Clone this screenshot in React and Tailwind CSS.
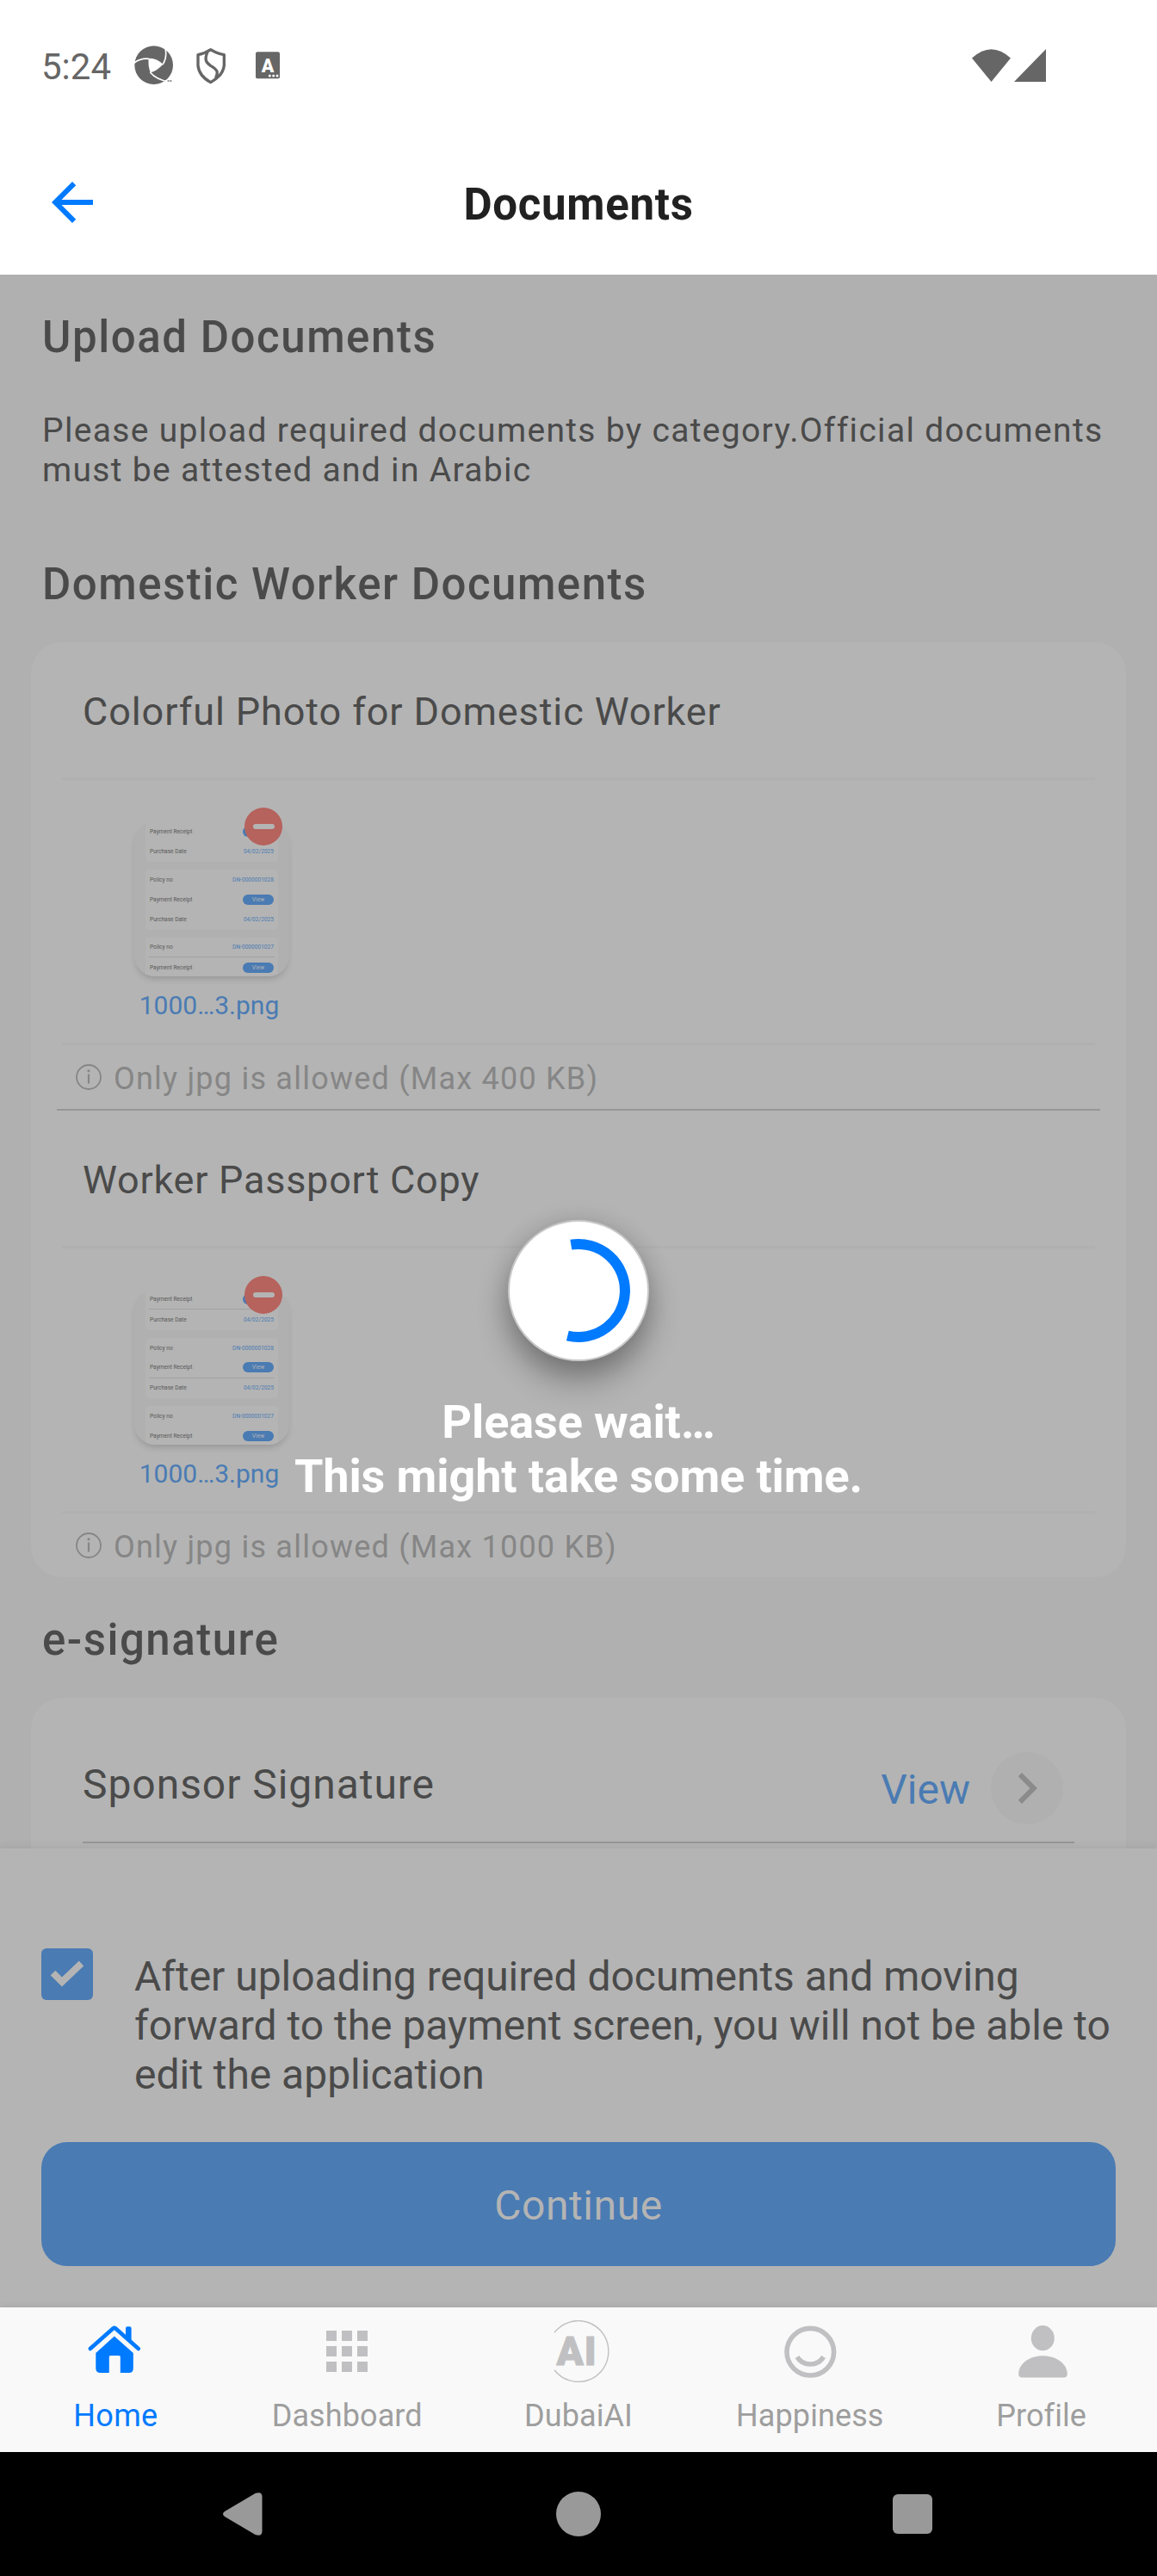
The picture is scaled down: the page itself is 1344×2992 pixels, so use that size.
function StatusBar() {
  return (
    <header className="flex h-[151px] items-center pl-[48px] pr-[129px] text-[#666666]">
      <span className="pt-[4px] text-[42px] leading-[50px]">5:24</span>
      <svg className="ml-[27px] h-[46px] w-[46px]" viewBox="33 38 138 138">
        <circle cx="101" cy="106" r="67" fill="#666666" />
        <path d="M83 83Q107 79 133 103Q112 126 89 132Q80 108 83 83Z" fill="#fff" />
        <g fill="none" stroke="#fff" strokeWidth="5">
          <path d="M30 100Q55 80 84 84" />
          <path d="M139 38Q150 76 132 104" />
          <path d="M88 131Q112 158 152 163" />
        </g>
        <path d="M149 161h5M157 161h6" stroke="#666666" strokeWidth="5" />
      </svg>
      <svg className="ml-[25px] h-[44px] w-[36px]" viewBox="246 38 108 132">
        <g fill="none" stroke="#666666" strokeWidth="10" strokeLinejoin="round">
          <path d="M299 49Q280 62 255 67V104Q258 140 299 163Q343 138 346 104V67Q319 62 299 49Z" />
          <path d="M288 58C276 84 284 95 299 105C324 119 326 127 317 147" />
        </g>
      </svg>
      <svg className="ml-[34px] h-[32px] w-[28px]" viewBox="456 59 84 96">
        <rect x="456" y="60" width="84" height="93" rx="6" fill="#666666" />
        <text x="498" y="130" textAnchor="middle" fontSize="64" fontWeight="900" fill="#fff" fontFamily="Roboto">A</text>
        <circle cx="505" cy="143" r="4.5" fill="#fff" />
        <circle cx="518" cy="143" r="4.5" fill="#fff" />
        <circle cx="531" cy="143" r="4.5" fill="#fff" />
      </svg>
      <svg className="ml-auto h-[38px] w-[45px]" viewBox="0 0 45 38">
        <path d="M0 10.5Q22.5 -10 45 10.5L22.5 38Z" fill="#666666" />
      </svg>
      <svg className="ml-[4px] h-[38px] w-[37px]" viewBox="0 0 37 38">
        <path d="M37 0V38H0Z" fill="#666666" />
      </svg>
    </header>
  );
}

function TitleBar() {
  return (
    <div className="grid h-[168px] grid-cols-[1fr_auto_1fr] items-center px-[48px]">
      <svg className="h-[72px] w-[72px]" viewBox="0 0 24 24" fill="#007aff">
        <path d="M20 11H7.83l5.59-5.59L12 4l-8 8 8 8 1.41-1.41L7.83 13H20v-2z" />
      </svg>
      <h1 className="pt-[6px] text-[51px] font-bold leading-[60px] tracking-[0.7px] text-[#212121]">Documents</h1>
      <span />
    </div>
  );
}

function ThumbRow({ label, value, button, line }) {
  return (
    <div
      className={
        line
          ? "flex h-[23.3px] items-center justify-between border-b border-[#a2a2a2] px-[1px]"
          : "flex h-[23.3px] items-center justify-between px-[1px]"
      }
    >
      <span className="text-[#585858]">{label}</span>
      {button ? (
        <span className="flex h-[12px] w-[36px] items-center justify-center rounded-full bg-[#4a7bb3] text-[#b4b4b4]">View</span>
      ) : (
        <span className="text-[#4a7bb3]">{value}</span>
      )}
    </div>
  );
}

function Thumbnail({ alt }) {
  return (
    <div className="relative h-[180px] w-[180px]">
      <div className="flex h-[180px] w-[180px] flex-col items-center overflow-hidden rounded-[24px] bg-[#b0b0b0] text-[6.6px] leading-[8px] shadow-[0_5px_8px_-3px_rgba(0,0,0,0.2)]">
        <div className="h-[47px] w-[154px] shrink-0 rounded-b-[4px] bg-[#b4b4b4] px-[4px]">
          <ThumbRow label="Payment Receipt" button line={alt} />
          <ThumbRow label="Purchase Date" value="04/02/2025" />
        </div>
        <div className="mt-[9px] h-[70px] w-[154px] shrink-0 rounded-[4px] bg-[#b4b4b4] px-[4px]">
          <ThumbRow label="Policy no" value="DN-0000001028" />
          <ThumbRow label="Payment Receipt" button line={alt} />
          <ThumbRow label="Purchase Date" value="04/02/2025" />
        </div>
        <div className="mt-[9px] h-[60px] w-[154px] shrink-0 rounded-t-[4px] bg-[#b4b4b4] px-[4px]">
          <ThumbRow label="Policy no" value="DN-0000001027" line={!alt} />
          <ThumbRow label="Payment Receipt" button />
        </div>
      </div>
      <div className="absolute -top-[16px] right-[8px] flex h-[44px] w-[44px] items-center justify-center rounded-full bg-[#b6625d]">
        <span className="h-[6px] w-[25px] rounded-full bg-[#b4b4b4]" />
      </div>
    </div>
  );
}

function DocumentSection({ title, limit, alt }) {
  return (
    <section>
      <div className="flex h-[157px] items-center pl-[60px] pt-[4px]">
        <h3
          className={
            alt
              ? "text-[45px] leading-[54px] tracking-[0.75px] text-[#4a4a4a]"
              : "text-[45px] leading-[54px] tracking-[0.9px] text-[#4a4a4a]"
          }
        >
          {title}
        </h3>
      </div>
      <div className="mx-[36px] h-[3px] bg-[#b0b0b0]" />
      <div className="flex h-[305px] flex-col items-start pl-[120px] pt-[48px]">
        <Thumbnail alt={alt} />
        <p className="mt-[16px] w-[180px] pr-[6px] text-center text-[30px] leading-[36px] text-[#4a7bb3]">1000…3.png</p>
      </div>
      <div className="mx-[36px] h-[3px] bg-[#b0b0b0]" />
      <div className="flex h-[74px] items-center pl-[52px] text-[#868686]">
        <svg className="h-[30px] w-[30px]" viewBox="0 0 30 30" fill="none" stroke="#868686">
          <circle cx="15" cy="15" r="14" strokeWidth="1.8" />
          <path d="M15 11.5V22.5" strokeWidth="2.2" />
          <circle cx="15" cy="7.8" r="1.6" fill="#868686" stroke="none" />
        </svg>
        <p className="ml-[14px] pt-[3px] text-[36px] leading-[42px] tracking-[1.23px]">Only jpg is allowed (Max {limit} KB)</p>
      </div>
    </section>
  );
}

function LoadingOverlay() {
  return (
    <div className="absolute inset-x-0 top-[1098px] flex flex-col items-center">
      <div className="mr-[1px] h-[164px] w-[164px] rounded-full border-2 border-[#c9c9c9] bg-white shadow-[0_22px_36px_rgba(0,0,0,0.32),0_0_28px_rgba(0,0,0,0.10)]">
        <svg className="h-[160px] w-[160px]" viewBox="0 0 160 160" fill="none">
          <path d="M71.3 26.7A54 54 0 1 1 67.3 132.5" stroke="#007aff" strokeWidth="12" />
        </svg>
      </div>
      <p className="mt-[39px] text-center text-[54px] font-bold leading-[63px] tracking-[-0.1px] text-white">
        Please wait…
        <br />
        This might take some time.
      </p>
    </div>
  );
}

function NavItem({ label, active, children }) {
  return (
    <div className="flex flex-1 flex-col items-center pt-[15px]">
      <svg className="h-[72px] w-[72px]" viewBox="0 0 72 72" fill="#c0c0c2">
        {children}
      </svg>
      <span
        className={
          active
            ? "mt-[18px] text-[36px] leading-[42px] tracking-[0.3px] text-[#007aff]"
            : "mt-[18px] text-[36px] leading-[42px] tracking-[0.1px] text-[#9e9e9e]"
        }
      >
        {label}
      </span>
    </div>
  );
}

function BottomNav() {
  const cells = [0, 18, 36];
  return (
    <nav className="relative z-20 flex h-[168px] bg-[#f9f9f9] shadow-[0_-2px_6px_rgba(0,0,0,0.06)]">
      <NavItem label="Home" active>
        <g fill="#007aff" transform="translate(1.8 0)">
          <path d="M46.2 20V9.3Q46.2 7.3 48.2 7.3H50.8Q52.8 7.3 52.8 9.3V28Z" />
          <path d="M5 33L31.5 9.5Q33 8.3 34.5 9.5L61 33" fill="none" stroke="#007aff" strokeWidth="4.6" strokeLinecap="round" strokeLinejoin="round" />
          <path d="M33 18.5L55 38V56Q55 61 50 61H40V42.5Q40 41 38.5 41H28.5Q27 41 27 42.5V61H17Q11.5 61 11.5 56V38Z" />
        </g>
      </NavItem>
      <NavItem label="Dashboard">
        {cells.map((y) => cells.map((x) => <rect key={`${x}-${y}`} x={12 + x} y={12 + y} width="12" height="12" />))}
      </NavItem>
      <NavItem label="DubaiAI">
        <path d="M8 14.3A35 35 0 0 1 70.8 36A35 35 0 0 1 8 57.7" fill="none" stroke="#c0c0c2" strokeWidth="1.4" />
        <text x="10.5" y="52" fontFamily="Roboto" fontSize="46" fontWeight="900" letterSpacing="0.8" stroke="#c0c0c2" strokeWidth="1">AI</text>
      </NavItem>
      <NavItem label="Happiness">
        <circle cx="36.3" cy="36.7" r="27.3" fill="none" stroke="#c0c0c2" strokeWidth="5.6" />
        <path d="M21 42.5Q26 51 36.3 51Q46.600 51 51.6 42.5" fill="none" stroke="#c0c0c2" strokeWidth="5.6" />
      </NavItem>
      <NavItem label="Profile">
        <ellipse cx="37.3" cy="20.7" rx="13.5" ry="14.6" />
        <path d="M9.2 62.5C9.2 51 21 41.3 37.3 41.3S65.8 51 65.8 62.5Q65.8 66.5 61.5 66.5H13.5Q9.2 66.5 9.2 62.5Z" />
      </NavItem>
    </nav>
  );
}

function SystemBar() {
  return (
    <footer className="relative z-30 flex h-[144px] items-center justify-between bg-black pl-[258px] pr-[261px]">
      <svg className="h-[52px] w-[48px]" viewBox="0 0 48 52">
        <path d="M3 23L38.5 2Q46.5 -0.5 46.5 6V46Q46.5 52.5 38.5 50L3 29Q-1 26 3 23Z" fill="#999999" />
      </svg>
      <span className="h-[52px] w-[52px] rounded-full bg-[#999999]" />
      <span className="h-[46px] w-[46px] rounded-[6px] bg-[#999999]" />
    </footer>
  );
}

export default function App() {
  return (
    <div className="flex h-[2992px] w-[1344px] flex-col overflow-hidden bg-white font-['Roboto',sans-serif] antialiased">
      <StatusBar />
      <TitleBar />
      <main className="relative h-[2361px]">
        <div className="h-[1828px] overflow-hidden bg-[#b0b0b0] pt-[43px]">
          <h2 className="pl-[49px] text-[51px] font-medium leading-[60px] tracking-[1.55px] text-[#4a4a4a]">Upload Documents</h2>
          <p className="mt-[55px] pl-[49px] text-[39px] leading-[46px] tracking-[1.31px] text-[#4a4a4a]">
            Please upload required documents by category.Official documents
            <br />
            must be attested and in Arabic
          </p>
          <h2 className="mt-[80px] pl-[49px] text-[51px] font-medium leading-[60px] tracking-[1.5px] text-[#4a4a4a]">
            Domestic Worker Documents
          </h2>
          <div className="mx-[36px] mt-[37px] rounded-[36px] bg-[#b4b4b4]">
            <DocumentSection title="Colorful Photo for Domestic Worker" limit="400" />
            <div className="mx-[30px] h-[2px] bg-[#979797]" />
            <DocumentSection title="Worker Passport Copy" limit="1000" alt />
          </div>
          <h2 className="mt-[43px] pl-[49px] text-[51px] font-medium leading-[60px] tracking-[1.5px] text-[#4a4a4a]">e-signature</h2>
          <div className="mx-[36px] mt-[37px] h-[260px] rounded-[36px] bg-[#b4b4b4]">
            <div className="flex h-[167px] items-center pl-[60px] pr-[73px] pt-[43px]">
              <h3 className="flex-1 pb-[8px] text-[48px] leading-[56px] tracking-[0.95px] text-[#4a4a4a]">Sponsor Signature</h3>
              <span className="pt-[3px] text-[48px] leading-[56px] text-[#4a7bb3]">View</span>
              <span className="ml-[24px] flex h-[84px] w-[84px] items-center justify-center rounded-full bg-[#b0b0b0]">
                <svg className="h-[72px] w-[72px]" viewBox="0 0 24 24" fill="#8b8b8b">
                  <path d="M10 6L8.59 7.41 13.17 12l-4.58 4.59L10 18l6-6z" />
                </svg>
              </span>
            </div>
            <div className="mx-[60px] h-[2px] bg-[#979797]" />
          </div>
        </div>
        <div className="relative h-[533px] bg-[#b4b4b4] px-[48px] pt-[116px] shadow-[0_-4px_8px_rgba(0,0,0,0.05)]">
          <div className="flex items-start">
            <span className="flex h-[60px] w-[60px] shrink-0 rounded-[6px] bg-[#4a7bb3]">
              <svg className="h-[60px] w-[60px]" viewBox="0 0 60 60">
                <path d="M13.5 28.5L24 39L46.5 17.5" fill="none" stroke="#b4b4b4" strokeWidth="8" />
              </svg>
            </span>
            <p className="ml-[48px] mt-[4px] text-[48px] leading-[57px] tracking-[-0.02px] text-[#4a4a4a]">
              After uploading required documents and moving
              <br />
              forward to the payment screen, you will not be able to
              <br />
              edit the application
            </p>
          </div>
          <button className="mt-[50px] flex h-[144px] w-full items-center justify-center rounded-[30px] bg-[#4a7bb3] pt-[3px] text-[48px] leading-[56px] tracking-[0.6px] text-[#b4b4b4]">
            Continue
          </button>
        </div>
        <LoadingOverlay />
      </main>
      <BottomNav />
      <SystemBar />
    </div>
  );
}
